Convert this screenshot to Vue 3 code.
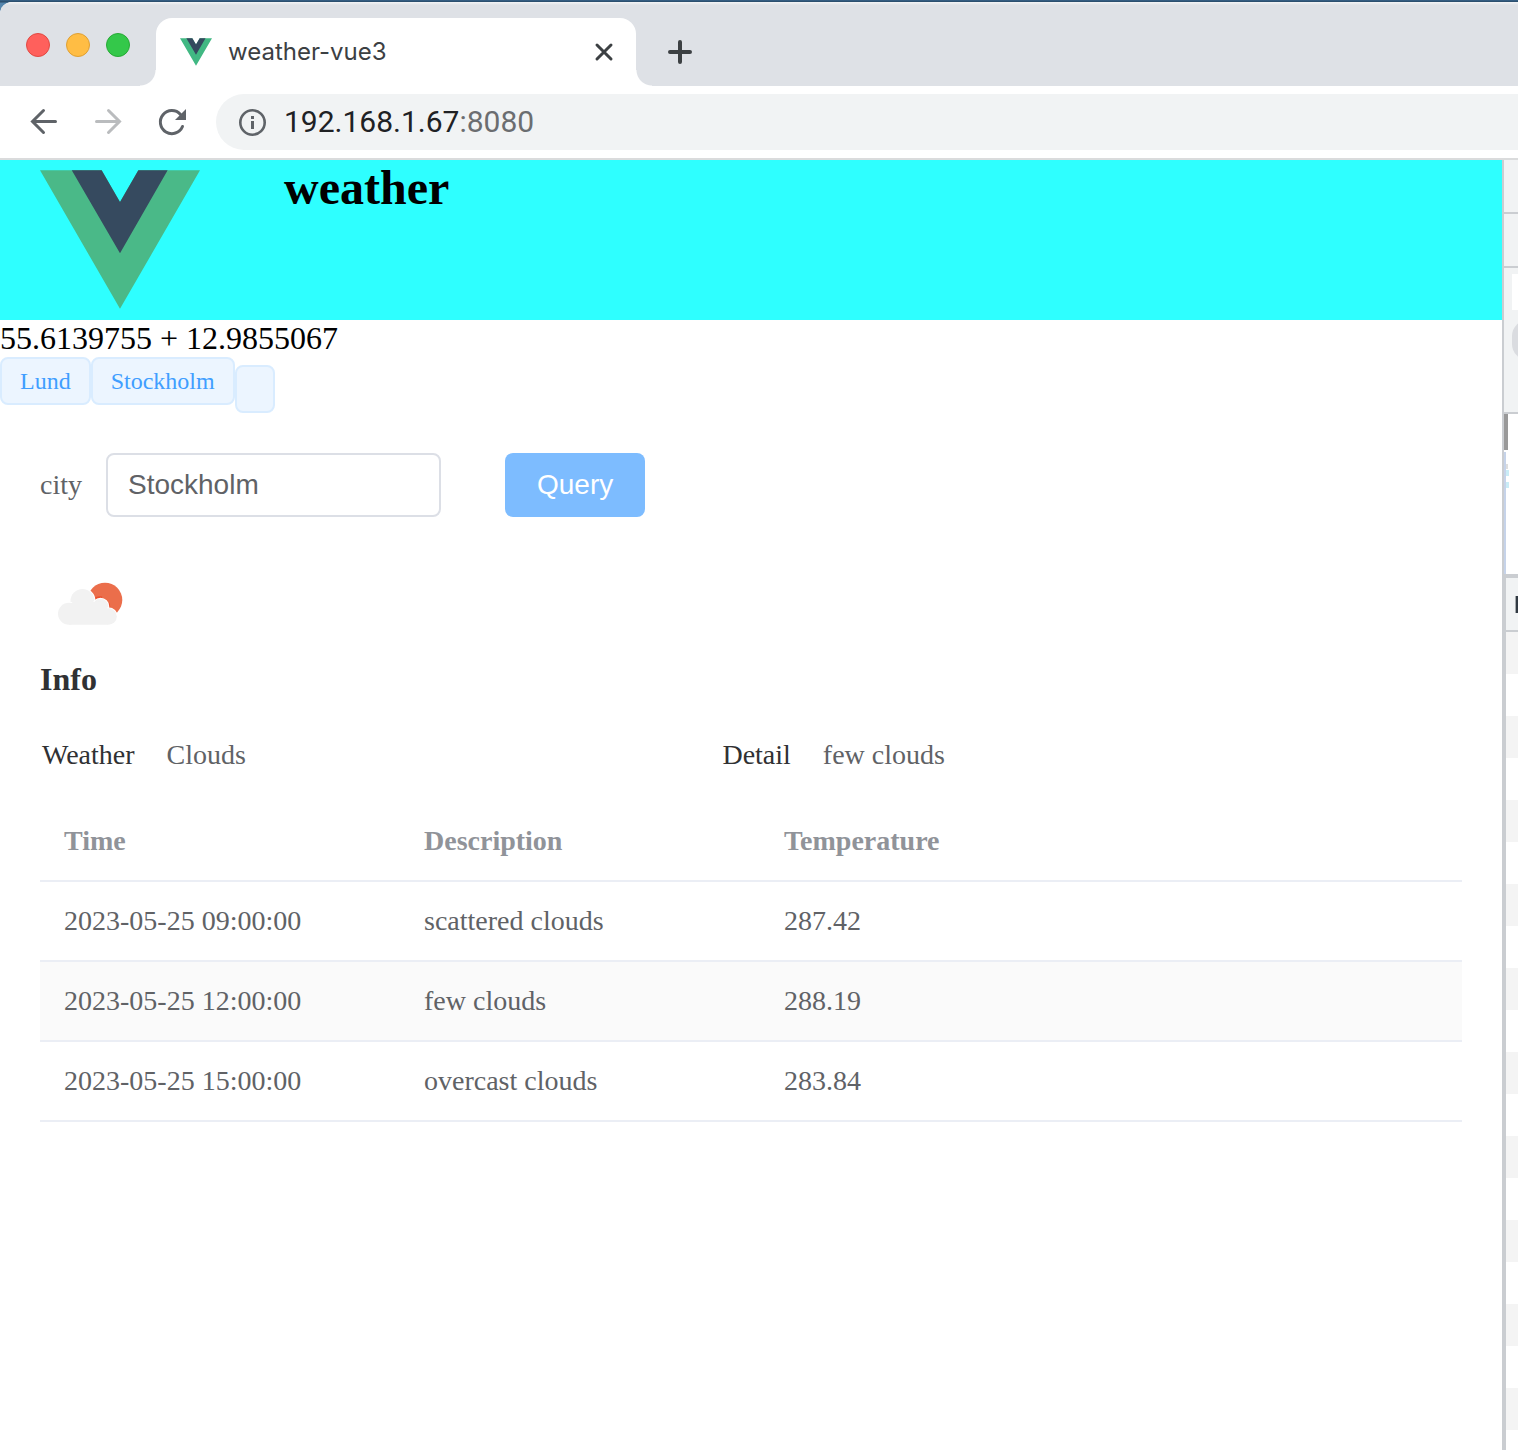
<script setup>
import { ref } from 'vue'

const city = ref('Stockholm')
const tags = ['Lund', 'Stockholm', '']
const forecast = [
  { time: '2023-05-25 09:00:00', description: 'scattered clouds', temperature: '287.42' },
  { time: '2023-05-25 12:00:00', description: 'few clouds', temperature: '288.19' },
  { time: '2023-05-25 15:00:00', description: 'overcast clouds', temperature: '283.84' },
]
</script>

<template>
  <div class="desktop">
    <div class="window">
      <header class="tab-strip">
        <div class="lights">
          <button class="light red" aria-label="Close window"></button>
          <button class="light yellow" aria-label="Minimize window"></button>
          <button class="light green" aria-label="Zoom window"></button>
        </div>
        <div class="tab">
          <svg class="favicon" viewBox="0 0 262 227" aria-hidden="true">
            <path fill="#41b883" d="M161 0l-30 52L101 0H0l131 227L262 0z" />
            <path fill="#34495e" d="M161 0l-30 52L101 0H52l79 136L209 0z" />
          </svg>
          <span class="tab-title">weather-vue3</span>
          <button class="icon-button" aria-label="Close tab">
            <svg width="20" height="20" viewBox="0 0 20 20"><path d="M3 3l14 14M17 3L3 17" fill="none" stroke="#3c4043" stroke-width="3" stroke-linecap="round" /></svg>
          </button>
        </div>
        <button class="icon-button new-tab" aria-label="New tab">
          <svg width="24" height="24" viewBox="0 0 24 24"><path d="M12 2v20M2 12h20" fill="none" stroke="#3c4043" stroke-width="4" stroke-linecap="round" /></svg>
        </button>
      </header>

      <nav class="toolbar">
        <button class="icon-button" aria-label="Back">
          <svg width="32" height="32" viewBox="0 0 32 32"><path d="M27.500 15.500H5M15.500 4.500L4.500 15.500L15.500 26.500" fill="none" stroke="#5f6368" stroke-width="3" stroke-linecap="round" /></svg>
        </button>
        <button class="icon-button" aria-label="Forward" disabled>
          <svg width="32" height="32" viewBox="0 0 32 32"><path d="M4.500 15.500H27M16.500 4.500L27.500 15.500L16.500 26.500" fill="none" stroke="#babcbe" stroke-width="3" stroke-linecap="round" /></svg>
        </button>
        <button class="icon-button" aria-label="Reload">
          <svg width="32" height="32" viewBox="0 0 32 32"><path d="M26.500 20.500A11.500 11.500 0 1 1 24.500 8.500" fill="none" stroke="#5f6368" stroke-width="3" stroke-linecap="round" /><path d="M30 3v11H19z" fill="#5f6368" /></svg>
        </button>
        <div class="address">
          <svg width="28" height="28" viewBox="0 0 28 28" aria-hidden="true"><circle cx="14.500" cy="14.500" r="12.200" fill="none" stroke="#5f6368" stroke-width="2.600" /><path d="M13 8h3v3h-3zM13 13h3v8h-3z" fill="#5f6368" /></svg>
          <span class="url">192.168.1.67<span class="port">:8080</span></span>
        </div>
      </nav>

      <div class="content">
        <main class="page">
          <div class="banner">
            <svg class="logo" viewBox="0 0 262 227" role="img" aria-label="Vue logo">
              <path fill="#4ab988" d="M161 0l-30 52L101 0H0l131 227L262 0z" />
              <path fill="#364a5f" d="M161 0l-30 52L101 0H52l79 136L209 0z" />
            </svg>
            <h1>weather</h1>
          </div>
          <div class="coords">55.6139755 + 12.9855067</div>
          <div class="tags">
            <span v-for="tag in tags" :key="tag" class="tag" :class="{ blank: !tag }">{{ tag }}</span>
          </div>

          <form class="query" @submit.prevent>
            <label for="city">city</label>
            <input id="city" v-model="city" type="text" />
            <button type="submit">Query</button>
          </form>

          <section class="report">
            <svg class="weather-icon" viewBox="0 0 100 100" role="img" aria-label="Few clouds">
              <circle cx="65" cy="45" r="17.300" fill="#eb6e4b" />
              <path d="M55 43.500Q58 41.500 62 42.500M68.500 48L69.500 53" fill="none" stroke="#ec4f2c" stroke-width="2" />
              <g fill="#f2f2f2" stroke="#fff" stroke-width="2" paint-order="stroke">
                <circle cx="42.500" cy="46" r="12" />
                <circle cx="60.500" cy="51.500" r="7.800" />
                <circle cx="68.500" cy="61.500" r="8.300" />
                <circle cx="29" cy="58.700" r="11" />
              </g>
              <path d="M29 69.800V50L42 40L54 47L61 46L68 54V69.800z" fill="#f2f2f2" />
            </svg>
            <h2>Info</h2>
            <dl class="summary">
              <div><dt>Weather</dt><dd>Clouds</dd></div>
              <div><dt>Detail</dt><dd>few clouds</dd></div>
            </dl>
            <table class="forecast">
              <thead>
                <tr><th scope="col">Time</th><th scope="col">Description</th><th scope="col" class="rest">Temperature</th></tr>
              </thead>
              <tbody>
                <tr v-for="row in forecast" :key="row.time">
                  <td>{{ row.time }}</td><td>{{ row.description }}</td><td>{{ row.temperature }}</td>
                </tr>
              </tbody>
            </table>
          </section>
        </main>

        <aside class="devtools">
          <div class="dt-bar"></div>
          <div class="dt-bar"></div>
          <div class="dt-filters"><i class="field"></i><i class="pill"></i></div>
          <div class="dt-timeline">
            <i class="marker"></i>
            <div class="lane"><i class="grey"></i><i></i><i class="last"></i></div>
          </div>
          <div class="dt-lower">
            <div class="dt-head"><i></i></div>
            <div class="dt-rows"></div>
          </div>
        </aside>
      </div>
    </div>
  </div>
</template>

<style>
body {
  margin: 0;
}
</style>

<style scoped>
.desktop {
  box-sizing: border-box;
  min-height: 100vh;
  padding-top: 2px;
  display: flex;
  background: linear-gradient(#38638a, #274966 2px, #5485ad 3px);
  overflow: hidden;
}

.window {
  flex: 1;
  min-width: 0;
  display: flex;
  flex-direction: column;
  background: #fff;
  border-radius: 12px 0 0 0;
  overflow: hidden;
}

button {
  border: 0;
  padding: 0;
  font: inherit;
}

.tab-strip {
  display: flex;
  align-items: flex-end;
  height: 84px;
  background: linear-gradient(#f4f5f6, #dee1e6 3px);
}

.lights {
  box-sizing: border-box;
  display: flex;
  gap: 16px;
  width: 156px;
  height: 84px;
  padding: 31px 26px;
}

.light {
  box-sizing: border-box;
  width: 24px;
  height: 24px;
  border: 1px solid;
  border-radius: 50%;
}

.red {
  background: #ff605c;
  border-color: #e14942;
}

.yellow {
  background: #ffbd44;
  border-color: #dfa033;
}

.green {
  background: #34c84a;
  border-color: #27aa35;
}

.tab {
  position: relative;
  box-sizing: border-box;
  display: flex;
  align-items: center;
  width: 480px;
  height: 68px;
  padding: 0 22px 0 24px;
  background: #fff;
  border-radius: 16px 16px 0 0;
}

.tab::before,
.tab::after {
  content: '';
  position: absolute;
  bottom: 0;
  width: 16px;
  height: 16px;
}

.tab::before {
  right: 100%;
  background: radial-gradient(circle at 0 0, transparent 15px, #fff 16px);
}

.tab::after {
  left: 100%;
  background: radial-gradient(circle at 100% 0, transparent 15px, #fff 16px);
}

.favicon {
  width: 32px;
  height: 28px;
}

.tab-title {
  flex: 1;
  margin-left: 16px;
  font: 24px/32px Inter, sans-serif;
  color: #3c4043;
}

.icon-button {
  display: flex;
  background: none;
}

.new-tab {
  height: 68px;
  padding: 0 32px;
  align-items: center;
}

.toolbar {
  display: flex;
  align-items: center;
  gap: 32px;
  height: 72px;
  padding-left: 28px;
  border-bottom: 2px solid #dadbdc;
}

.address {
  flex: 1;
  display: flex;
  align-items: center;
  gap: 18px;
  height: 56px;
  margin-left: -4px;
  padding-left: 22px;
  background: #f1f3f4;
  border-radius: 28px 0 0 28px;
}

.url {
  font: 30px/36px Roboto, sans-serif;
  color: #202124;
}

.port {
  color: #6b6d70;
}

.content {
  flex: 1;
  display: flex;
}

.page {
  flex: 1;
  min-width: 0;
  font-family: 'Liberation Serif', serif;
  color: #000;
}

.banner {
  display: flex;
  height: 160px;
  background: #2effff;
}

.logo {
  width: 160px;
  height: 139px;
  margin: 10px 84px 0 40px;
}

h1 {
  margin: 0;
  font-size: 48px;
  line-height: 56px;
}

.coords {
  font-size: 32px;
  line-height: 37px;
}

.tags {
  display: flex;
  height: 56px;
}

.tag {
  box-sizing: border-box;
  height: 48px;
  padding: 0 18px;
  border: 2px solid #d9ecff;
  border-radius: 8px;
  background: #ecf5ff;
  color: #409eff;
  font-size: 24px;
  line-height: 44px;
}

.blank {
  align-self: flex-end;
}

.query {
  display: flex;
  align-items: center;
  padding: 40px 40px 0;
  font-size: 28px;
  color: #606266;
}

.query label {
  margin-right: 24px;
}

.query input {
  box-sizing: border-box;
  width: 335px;
  height: 64px;
  margin: 0 64px 0 0;
  padding: 0 20px;
  border: 2px solid #dcdfe6;
  border-radius: 8px;
  font: 28px 'Liberation Sans', sans-serif;
  color: #606266;
  background: #fff;
}

.query button {
  height: 64px;
  padding: 0 32px;
  border-radius: 8px;
  background: #7dbcff;
  color: #fff;
  font: 28px 'Liberation Sans', sans-serif;
}

.report {
  padding: 38px 40px 0;
}

.weather-icon {
  display: block;
  width: 100px;
  height: 100px;
}

h2 {
  margin: 4px 0 36px;
  font-size: 32px;
  line-height: 40px;
  color: #303133;
}

.summary {
  display: grid;
  grid-template-columns: 23fr 25fr;
  margin: 0 0 27px;
  padding-left: 2px;
  font-size: 28px;
  line-height: 40px;
}

.summary div {
  display: flex;
  gap: 32px;
}

dt {
  color: #303133;
}

dd {
  margin: 0;
  color: #606266;
}

.forecast {
  width: 100%;
  table-layout: fixed;
  border-collapse: separate;
  border-spacing: 0;
  font-size: 28px;
  line-height: 46px;
  text-align: left;
  color: #606266;
}

.forecast th,
.forecast td {
  padding: 16px 24px;
  border-bottom: 2px solid #ebeef5;
}

.forecast th {
  box-sizing: border-box;
  width: 360px;
  color: #909399;
}

.forecast .rest {
  width: auto;
}

.forecast tbody tr:nth-child(even) {
  background: #fafafa;
}

.devtools {
  width: 14px;
  display: flex;
  flex-direction: column;
  border-left: 2px solid #cacdd1;
  overflow: hidden;
}

.dt-bar,
.dt-filters,
.dt-head {
  background: #f1f3f4;
  border-bottom: 2px solid #cacdd1;
}

.dt-bar,
.dt-head {
  height: 52px;
}

.dt-filters {
  box-sizing: border-box;
  height: 146px;
  padding: 6px 0 0 8px;
}

.field {
  display: block;
  height: 36px;
  background: #fff;
}

.pill {
  display: block;
  width: 40px;
  height: 40px;
  margin-top: 10px;
  border-radius: 16px;
  background: #dadce0;
}

.dt-timeline {
  height: 160px;
}

.marker {
  display: block;
  width: 4px;
  height: 36px;
  background: #999;
}

.lane {
  box-sizing: border-box;
  height: 122px;
  margin-top: 2px;
  padding-top: 12px;
  border-left: 2px solid #c6d3e9;
}

.lane i {
  display: block;
  width: 3px;
  height: 6px;
  background: #c9ecf6;
}

.lane .grey {
  width: 2px;
  height: 5px;
  margin-bottom: 1px;
  background: #dedede;
}

.lane .last {
  margin-top: 6px;
}

.dt-lower {
  flex: 1;
  display: flex;
  flex-direction: column;
  border-top: 4px solid #cacdd1;
  border-left: 2px solid #cacdd1;
}

.dt-head {
  display: flex;
  align-items: center;
  justify-content: flex-end;
}

.dt-head i {
  width: 2px;
  height: 17px;
  border-left: 1px solid #a5a9ac;
  background: #303942;
}

.dt-rows {
  flex: 1;
  background: repeating-linear-gradient(#f4f4f4 0 42px, #fff 42px 84px);
}
</style>
